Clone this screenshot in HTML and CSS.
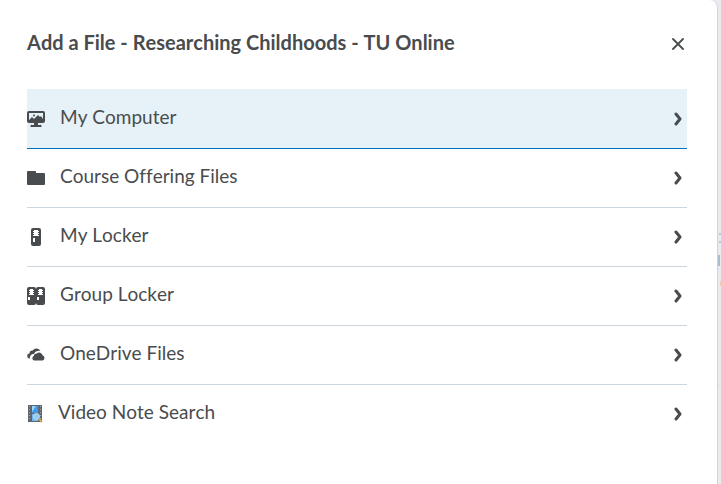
FILE: index.html
```html
<!DOCTYPE html>
<html lang="en">
  <head>
    <meta charset="UTF-8" />
    <meta name="viewport" content="width=device-width, initial-scale=1.0" />
    <title>Add a File</title>
    <link rel="stylesheet" href="styles.css">
  </head>
  <body>
    <div class="dialog" role="dialog" aria-labelledby="dialog-title">
      <div class="dialog-header">
        <h1 id="dialog-title">Add a File - Researching Childhoods - TU Online</h1>
        <button class="close-button" aria-label="Close">
          <svg width="12" height="12" viewBox="0 0 12 12">
            <path d="M1 1l10 10M11 1L1 11" fill="none" stroke="currentColor" stroke-width="1.8" stroke-linecap="round" />
          </svg>
        </button>
      </div>

      <ul class="source-list">
        <li>
          <button class="source active">
            <svg class="icon" viewBox="0 0 18 18">
              <path fill-rule="evenodd" d="M2 1h14a2 2 0 0 1 2 2v8a2 2 0 0 1-2 2h-5v2h2a1 1 0 0 1 1 2H4a1 1 0 0 1 1-2h2v-2H2a2 2 0 0 1-2-2V3a2 2 0 0 1 2-2zM2 3v7l3-3 2 2 4-4 2 2 1-1 2 3V3z" />
              <circle cx="7" cy="5.5" r="1" />
            </svg>
            <span class="source-name">My Computer</span>
            <svg class="chevron" viewBox="0 0 10 14"><path d="M3 2l4 5-4 5" /></svg>
          </button>
        </li>
        <li>
          <button class="source">
            <svg class="icon" viewBox="0 0 18 18">
              <path d="M1 2h7a1 1 0 0 1 1 1v1h8a1 1 0 0 1 1 1v10a1 1 0 0 1-1 1H1a1 1 0 0 1-1-1V3a1 1 0 0 1 1-1z" />
            </svg>
            <span class="source-name">Course Offering Files</span>
            <svg class="chevron" viewBox="0 0 10 14"><path d="M3 2l4 5-4 5" /></svg>
          </button>
        </li>
        <li>
          <button class="source">
            <svg class="icon" viewBox="0 0 18 18">
              <path fill-rule="evenodd" d="M6 0h6a2 2 0 0 1 2 2v14a2 2 0 0 1-2 2H6a2 2 0 0 1-2-2V2a2 2 0 0 1 2-2zM7 2v1H6v1h1v1H6v1h1v1H6v1h6V7h-1V6h1V5h-1V4h1V3h-1V2zM6 10v4h2v-4z" />
            </svg>
            <span class="source-name">My Locker</span>
            <svg class="chevron" viewBox="0 0 10 14"><path d="M3 2l4 5-4 5" /></svg>
          </button>
        </li>
        <li>
          <button class="source">
            <svg class="icon" viewBox="0 0 18 18">
              <path fill-rule="evenodd" d="M2 0h5a2 2 0 0 1 2 2v14a2 2 0 0 1-2 2H2a2 2 0 0 1-2-2V2a2 2 0 0 1 2-2zM3 2v1H2v1h1v1H2v1h1v1H2v1h5V7H6V6h1V5H6V4h1V3H6V2zM1 10v3h2v-3z" />
              <path fill-rule="evenodd" d="M11 0h5a2 2 0 0 1 2 2v14a2 2 0 0 1-2 2h-5a2 2 0 0 1-2-2V2a2 2 0 0 1 2-2zM12 2v1h-1v1h1v1h-1v1h1v1h-1v1h5V7h-1V6h1V5h-1V4h1V3h-1V2zM10 10v3h2v-3z" />
            </svg>
            <span class="source-name">Group Locker</span>
            <svg class="chevron" viewBox="0 0 10 14"><path d="M3 2l4 5-4 5" /></svg>
          </button>
        </li>
        <li>
          <button class="source">
            <svg class="icon" viewBox="0 0 18 18">
              <path d="M3 12.500a2.500 2.500 0 0 1-.5-5 3 3 0 0 1 3.200-3A4.500 4.500 0 0 1 13.500 5c-3-.6-5.500.8-6.500 3-3-.2-4.500 2.200-4 4.500z" />
              <path d="M7 14.500a2.500 2.500 0 0 1-.4-4.500 3 3 0 0 1 3.200-2.500 3.600 3.600 0 0 1 5.800 1.700 2.800 2.800 0 0 1-.1 5.300z" />
            </svg>
            <span class="source-name">OneDrive Files</span>
            <svg class="chevron" viewBox="0 0 10 14"><path d="M3 2l4 5-4 5" /></svg>
          </button>
        </li>
        <li>
          <button class="source">
            <svg class="icon icon-video" viewBox="0 0 16 18">
              <path fill="#5f666d" d="M1 0h14v17H1z" />
              <path fill="#3d9be9" d="M5 1h6v7H5z" />
              <path fill="#6db9f2" d="M5 9h6v7H5z" />
              <path fill="#9bd3fa" d="M5 1h4L5 7z" />
              <path stroke="#a4a9ad" stroke-width="1" stroke-dasharray="1 2" d="M2.500 1v15M13.500 1v15" />
              <circle cx="9.500" cy="11.500" r="3" fill="#8fcdf8" stroke="#c5d8e6" />
              <path stroke="#dda654" stroke-width="2" d="M12 14l3 3" />
            </svg>
            <span class="source-name">Video Note Search</span>
            <svg class="chevron" viewBox="0 0 10 14"><path d="M3 2l4 5-4 5" /></svg>
          </button>
        </li>
      </ul>
    </div>

    <svg class="page-behind" width="3" height="400" viewBox="0 0 3 400" aria-hidden="true">
      <path fill="#b8c8d8" d="M1 233h2v2H1zM1 241h2v2H1z" />
      <path fill="#a9bdd0" d="M0 255h2v11H0z" />
      <path fill="#e5cdb8" d="M2 281h1v5H2z" />
      <path fill="#dde0e6" d="M0 385h3v1H0z" />
    </svg>
  </body>
</html>
```

FILE: styles.css
```css
* {
  box-sizing: border-box;
}

body {
  display: flex;
  align-items: flex-start;
  margin: 0;
  background-color: #e9ebf0;
  color: #494c4e;
  font-family: Lato, "Liberation Sans", sans-serif;
  font-size: 19px;
  font-kerning: none;
  font-variant-ligatures: none;
}

.dialog {
  flex: 1;
  min-height: 100vh;
  padding: 27px 30px 40px 27px;
  background-color: #fff;
  border-right: 1px solid #cdd5dc;
  border-top-right-radius: 8px;
}

/* sliver of the dimmed page beside the dialog */
.page-behind {
  flex: none;
}

.dialog-header {
  display: flex;
  align-items: center;
  justify-content: space-between;
  margin-bottom: 32px;
}

h1 {
  margin: 0;
  font-size: 20px;
  line-height: 30px;
  font-weight: bold;
}

button {
  padding: 0;
  border: none;
  background: none;
  color: inherit;
  font: inherit;
  cursor: pointer;
}

.close-button {
  display: flex;
  align-items: center;
  justify-content: center;
  width: 18px;
  height: 30px;
  padding-top: 4px;
}

.source-list {
  margin: 0;
  padding: 0;
  list-style: none;
}

.source {
  display: flex;
  align-items: center;
  width: 100%;
  height: 59px;
  border-bottom: 1px solid #cdd5dc;
  text-align: left;
  font-kerning: none;
  font-variant-ligatures: none;
}

.source.active {
  height: 60px;
  background-color: #e7f2f8;
  border-bottom-color: #006fbf;
}

li:last-child .source {
  border-bottom-color: transparent;
}

.icon {
  width: 18px;
  height: 18px;
  margin-right: 15px;
  fill: currentColor;
}

.icon-video {
  width: 16px;
}

.source-name {
  flex: 1;
  padding-bottom: 4px;
  line-height: 28px;
}

.chevron {
  width: 10px;
  height: 14px;
  margin-right: 4px;
  fill: none;
  stroke: currentColor;
  stroke-width: 3;
  stroke-linecap: round;
  stroke-linejoin: round;
}
```
